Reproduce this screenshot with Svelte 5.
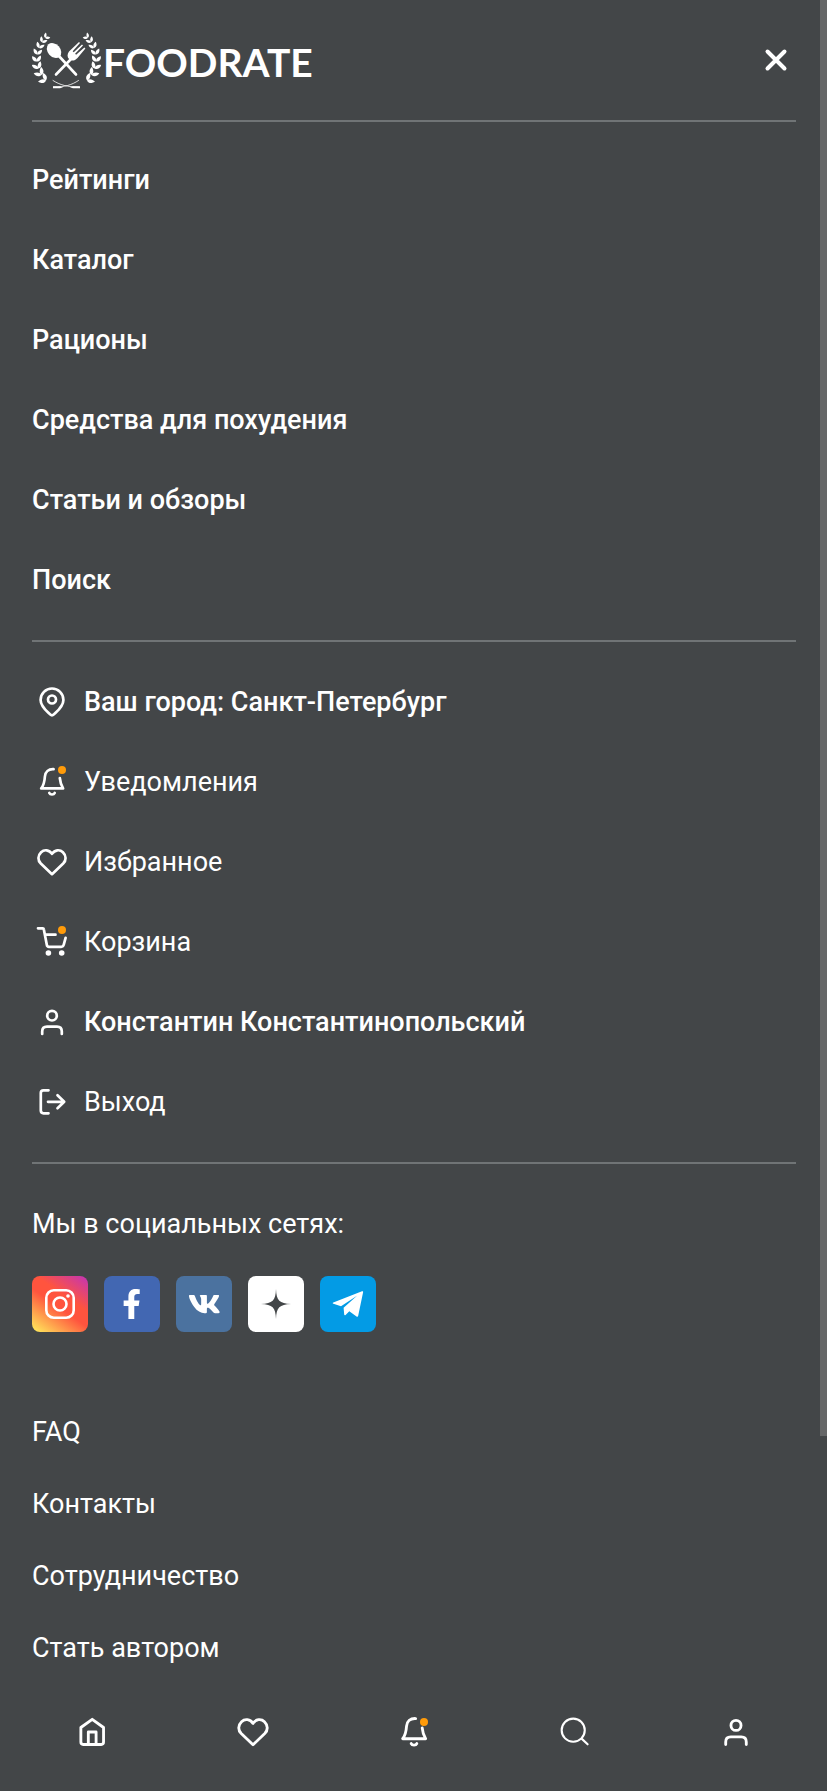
<script>
  const sections = ['Рейтинги', 'Каталог', 'Рационы', 'Средства для похудения', 'Статьи и обзоры', 'Поиск'];

  const account = [
    { icon: 'pin', label: 'Ваш город: Санкт-Петербург', strong: true },
    { icon: 'bell', label: 'Уведомления', dot: true },
    { icon: 'heart', label: 'Избранное' },
    { icon: 'cart', label: 'Корзина', dot: true },
    { icon: 'user', label: 'Константин Константинопольский', strong: true },
    { icon: 'exit', label: 'Выход' }
  ];

  const info = ['FAQ', 'Контакты', 'Сотрудничество', 'Стать автором'];

  const tabs = [
    { icon: 'home', label: 'Главная' },
    { icon: 'heart', label: 'Избранное' },
    { icon: 'bell', label: 'Уведомления', dot: true },
    { icon: 'search', label: 'Поиск' },
    { icon: 'user', label: 'Профиль' }
  ];

  // Leaf pairs of one laurel branch: base point, growth angle, leaf scale
  const leaves = [
    [14, 49.5, -62, 1],
    [9.5, 44, -42, 1],
    [6.5, 37.5, -26, 0.95],
    [5, 30.5, -8, 0.9],
    [5.2, 23.5, 6, 0.85],
    [7, 17, 20, 0.8],
    [9.8, 11.2, 32, 0.74],
    [13, 6.8, 46, 0.66]
  ];
</script>

{#snippet glyph(name)}
  <svg class="glyph" viewBox="0 0 40 40" aria-hidden="true">
    {#if name === 'pin'}
      <path d="M20 33.4c-1 0-1.8-.8-3.6-2.6C12.600 27.200 8.600 23.200 8.600 17.900a11.400 11.400 0 0 1 22.800 0c0 5.300-4 9.300-7.800 12.900-1.800 1.800-2.600 2.600-3.600 2.600z" />
      <circle cx="20" cy="17.500" r="4" />
    {:else if name === 'bell'}
      <path d="M21.600 7.200C16.500 6.900 13.300 9.800 12.900 14.500c-.3 4.500-.6 8.200-3.700 11.900h21.900c-2-3.100-2.900-6.300-3.300-10.400" />
      <path d="M17.300 31c.9 2 4.500 2 5.400 0" />
    {:else if name === 'heart'}
      <path d="M20 11.800C17.200 7.600 12.200 7.200 9.100 10.200 5.600 13.600 5.600 18.300 8.800 21.500L20 32.200l11.200-10.700c3.200-3.200 3.200-7.900-.3-11.300C27.800 7.200 22.800 7.600 20 11.800z" />
    {:else if name === 'cart'}
      <path d="M6 6.300h4.800c.6 0 .9.3 1 .9l3 15.600c.2 1.300.9 2 2.200 2h12.200c1.300 0 2.200-.7 2.500-2l1.900-7M13.500 12.700h10" />
      <g class="solid"><circle cx="16.400" cy="31" r="2.800" /><circle cx="29.700" cy="31" r="2.800" /></g>
    {:else if name === 'user'}
      <circle cx="20" cy="13.700" r="4.800" />
      <path d="M10.200 32v-2.500c0-3 1.800-4.800 4.800-4.800h10c3 0 4.800 1.800 4.800 4.800V32" />
    {:else if name === 'exit'}
      <path d="M16.500 8.300h-5c-1.700 0-2.700 1-2.700 2.700v17.600c0 1.700 1 2.700 2.700 2.700h5M16 19.800h16M25.500 13.300l6.700 6.500-6.700 6.500" />
    {:else if name === 'home'}
      <path d="M20.200 7.900 9.400 15.700v13.900c0 1.400.8 2.300 2.200 2.300h17.200c1.400 0 2.200-.9 2.200-2.300V15.700zM16.500 31.700V20h7.400v11.700" />
    {:else if name === 'search'}
      <g class="thin"><circle cx="18.300" cy="18.300" r="11" /><path d="m26.300 26.300 5.700 5.400" /></g>
    {/if}
  </svg>
{/snippet}

{#snippet branch()}
  {#each leaves as [x, y, a, s]}
    <g transform="translate({x} {y}) rotate({a}) scale({s})">
      <path transform="rotate(-36)" d="M0 0C-3-2-2.500-5.500 0-8 2-5.500 2.500-2 0 0z" />
      <path transform="rotate(40)" d="M0 0C-2.500-2-2-5.500 0-8 2.500-5.500 3-2 0 0z" />
    </g>
  {/each}
{/snippet}

<div class="page">
  <div class="scrollbar" aria-hidden="true"></div>

  <header>
    <a class="brand" href="#home">
      <svg class="emblem" viewBox="0 0 69 58" aria-hidden="true">
        {@render branch()}
        <g transform="matrix(-1 0 0 1 69 0)">{@render branch()}</g>
        <ellipse cx="22" cy="19.500" rx="6.300" ry="8.300" transform="rotate(-42 22 19.500)" />
        <path class="handle" d="M26 24 44 43.500M24 43.500 40 27" />
        <path d="M37 20.500 47 11l1 1-7.300 8.300 1 .9 8.300-7.700 1 1-7.900 8.200 1 1 8.300-7.100 1 1-7.900 9.400c-2.500 2.700-5.800 3.600-8.300 1.300-2.300-2.400-2-5.200-.2-7.800z" />
        <path class="ribbon" d="M21 49.500c7 4.500 14 6.500 26 6.500M46.500 49.500c-7 4.500-13 6.500-25 6.500" />
        <path d="M21 55.200h7l3 1-3 1h-7zM48 55.200h-7l-3 1 3 1h7z" />
      </svg>
      <span>FOODRATE</span>
    </a>
    <button class="close" type="button" aria-label="Закрыть">
      <svg viewBox="0 0 40 40" aria-hidden="true"><path d="m11.500 11.500 17 17M28.500 11.500l-17 17" /></svg>
    </button>
  </header>

  <main>
    <nav class="group sections" aria-label="Разделы">
      {#each sections as label}
        <a class="row strong" href="#section">{label}</a>
      {/each}
    </nav>

    <nav class="group" aria-label="Аккаунт">
      {#each account as item}
        <a class="row" class:strong={item.strong} href="#account">
          <span class="icon">
            {@render glyph(item.icon)}
            {#if item.dot}<i class="dot"></i>{/if}
          </span>
          {item.label}
        </a>
      {/each}
    </nav>

    <section class="social">
      <h2>Мы в социальных сетях:</h2>
      <div class="tiles">
        <a class="tile instagram" href="#instagram" aria-label="Instagram">
          <svg viewBox="0 0 56 56"><g class="outline"><rect x="14.300" y="14.300" width="27.400" height="27.400" rx="7.500" /><circle cx="28" cy="28" r="6.500" /></g><circle cx="36" cy="20" r="1.800" /></svg>
        </a>
        <a class="tile facebook" href="#facebook" aria-label="Facebook">
          <svg viewBox="0 0 56 56"><path transform="translate(18.300 13) scale(.0586)" d="M279.140 288l14.220-92.660h-88.910v-60.130c0-25.350 12.420-50.060 52.240-50.060h40.420V6.260S260.430 0 225.360 0c-73.220 0-121.080 44.380-121.080 124.720v70.620H22.890V288h81.390v224h100.170V288z" /></svg>
        </a>
        <a class="tile vk" href="#vk" aria-label="VK">
          <svg viewBox="0 0 56 56"><path transform="translate(11.900 13.500) scale(.057)" d="M545 117.700c3.700-12.500 0-21.700-17.800-21.700h-58.900c-15 0-21.900 7.900-25.600 16.700 0 0-30 73.100-72.400 120.500-13.700 13.700-20 18.100-27.500 18.100-3.700 0-9.400-4.400-9.400-16.900V117.700c0-15-4.200-21.700-16.600-21.700h-92.600c-9.400 0-15 7-15 13.500 0 14.200 21.200 17.500 23.400 57.500v86.800c0 19-3.400 22.500-10.900 22.500-20 0-68.600-73.400-97.400-157.400-5.800-16.300-11.500-22.900-26.600-22.900H38.800c-16.800 0-20.200 7.900-20.200 16.700 0 15.600 20 93.100 93.100 195.500C160.400 378.100 229 416 291.400 416c37.500 0 42.100-8.400 42.100-22.900 0-66.800-3.400-73.100 15.400-73.100 8.700 0 23.700 4.400 58.700 38.100 40 40 46.600 57.900 69 57.900h58.900c16.800 0 25.300-8.400 20.400-25-11.200-34.900-86.900-106.700-90.300-111.500-8.700-11.200-6.200-16.200 0-26.200.1-.1 72-101.300 79.400-135.600z" /></svg>
        </a>
        <a class="tile zen" href="#zen" aria-label="Дзен">
          <svg viewBox="0 0 56 56"><path d="M28 13c.4 11.500 3.500 14.600 15 15-11.500.4-14.600 3.500-15 15-.4-11.500-3.500-14.600-15-15 11.500-.4 14.600-3.500 15-15z" /></svg>
        </a>
        <a class="tile telegram" href="#telegram" aria-label="Telegram">
          <svg viewBox="0 0 56 56"><path d="M13.300 26.500 42 15.300c.8-.3 1.300.1 1.100 1l-4.900 23.500c-.2 1-.9 1.200-1.700.6l-7.200-5.200-3.700 3.700c-.6.6-1.300.4-1.400-.4l-.6-6.700L37 19.800 21 30.200l-7.600-2.400c-.9-.3-.9-1-.1-1.300z" /></svg>
        </a>
      </div>
    </section>

    <nav class="info" aria-label="Информация">
      {#each info as label}
        <a class="row" href="#info">{label}</a>
      {/each}
    </nav>
  </main>

  <nav class="tabs" aria-label="Быстрый доступ">
    {#each tabs as tab}
      <a class="icon" href="#tab" aria-label={tab.label}>
        {@render glyph(tab.icon)}
        {#if tab.dot}<i class="dot"></i>{/if}
      </a>
    {/each}
  </nav>
</div>

<style>
  :global(body) {
    margin: 0;
    background: #434648;
  }

  .page {
    position: relative;
    display: flex;
    flex-direction: column;
    min-height: 100vh;
    box-sizing: border-box;
    color: #fff;
    font-family: Roboto, 'Noto Sans', sans-serif;
    font-size: 27px;
    line-height: 40px;
  }

  a {
    color: inherit;
    text-decoration: none;
  }

  svg {
    display: block;
    fill: currentColor;
  }

  .scrollbar {
    position: absolute;
    top: 0;
    right: 0;
    width: 7px;
    height: 1436px;
    background: #656667;
  }

  header {
    display: flex;
    align-items: center;
    justify-content: space-between;
    margin: 0 31px 0 32px;
    height: 120px;
    border-bottom: 2px solid #707476;
  }

  .brand {
    display: flex;
    align-items: center;
    gap: 2px;
    font-family: Lato, sans-serif;
    font-size: 39px;
    font-weight: 700;
  }

  .brand span {
    padding-top: 4px;
  }

  .emblem {
    width: 69px;
    height: 58px;
  }

  .handle,
  .ribbon {
    fill: none;
    stroke: currentColor;
    stroke-width: 2.6;
    stroke-linecap: round;
  }

  .ribbon {
    stroke-width: 0.8;
  }

  .close {
    width: 40px;
    height: 40px;
    padding: 0;
    border: 0;
    background: none;
    color: inherit;
  }

  .close svg {
    fill: none;
    stroke: currentColor;
    stroke-width: 4;
    stroke-linecap: round;
  }

  main {
    flex: 1;
    margin: 0 31px 0 32px;
  }

  .group {
    display: flex;
    flex-direction: column;
    gap: 40px;
    padding: 40px 0;
    border-bottom: 2px solid #707476;
  }

  .sections {
    padding-top: 38px;
  }

  .row {
    display: flex;
    align-items: center;
    gap: 12px;
  }

  .strong {
    font-weight: 500;
  }

  .icon {
    position: relative;
    flex: none;
    width: 40px;
    height: 40px;
  }

  .glyph {
    width: 100%;
    height: 100%;
    fill: none;
    stroke: currentColor;
    stroke-width: 2.7;
    stroke-linecap: round;
    stroke-linejoin: round;
  }

  .glyph .solid {
    fill: currentColor;
    stroke: none;
  }

  .glyph .thin {
    stroke-width: 2;
  }

  .dot {
    position: absolute;
    top: 4px;
    right: 6px;
    width: 8px;
    height: 8px;
    border-radius: 50%;
    background: #ff9b0a;
  }

  .social {
    padding: 40px 0 80px;
  }

  h2 {
    margin: 0 0 32px;
    font-size: inherit;
    font-weight: 400;
  }

  .tiles {
    display: flex;
    gap: 16px;
  }

  .tile {
    width: 56px;
    height: 56px;
    border-radius: 8px;
  }

  .outline {
    fill: none;
    stroke: currentColor;
    stroke-width: 2.6;
  }

  .instagram {
    background: linear-gradient(35deg, #ffe35a 4%, #ff543e 46%, #ff543e 62%, #c837ab 96%);
  }

  .facebook {
    background: #4267b2;
  }

  .vk {
    background: #4b729f;
  }

  .zen {
    background: #fff;
    color: #434648;
  }

  .telegram {
    background: #039be5;
  }

  .info {
    display: flex;
    flex-direction: column;
    gap: 32px;
  }

  .tabs {
    position: sticky;
    bottom: 0;
    display: grid;
    grid-template-columns: repeat(5, 1fr);
    justify-items: center;
    padding: 38px 11px;
  }

  .tabs .icon {
    width: 42px;
    height: 42px;
  }

  .tabs .dot {
    top: 7px;
    right: 7px;
  }
</style>
